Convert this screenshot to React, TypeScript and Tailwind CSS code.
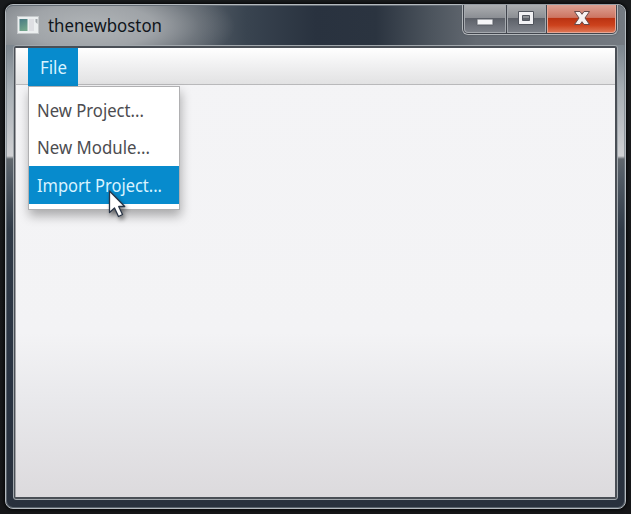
import React from "react";

const items = [
  { label: "New Project...", width: 107 },
  { label: "New Module...", width: 113 },
  { label: "Import Project...", width: 125, active: true },
];

function Label({ text, width, size = 18 }: { text: string; width: number; size?: number }) {
  return (
    <svg width={width + 4} height="28" className="block shrink-0 overflow-visible" fill="currentColor">
      <text x="0" y="20.500" fontSize={size} textLength={width} lengthAdjust="spacingAndGlyphs">
        {text}
      </text>
    </svg>
  );
}

function AppIcon() {
  return (
    <svg width="22" height="18" viewBox="0 0 22 18" className="block shrink-0">
      <defs>
        <linearGradient id="pane" x1="0" y1="0" x2="0.3" y2="1">
          <stop offset="0" stopColor="#477a83" />
          <stop offset="1" stopColor="#72a58c" />
        </linearGradient>
      </defs>
      <rect x="0.5" y="0.5" width="21" height="17" fill="#eceff0" stroke="#c4c8ca" />
      <rect x="2.5" y="3" width="8" height="12" fill="url(#pane)" />
      <rect x="12" y="3" width="5" height="12" fill="#dedfe3" />
      <path d="M18.500 3h2v5l-2-2z" fill="#a4aaad" />
    </svg>
  );
}

function WindowButtons() {
  return (
    <div className="flex h-[30px] w-[156px] rounded-b-[6px] border border-t-0 border-[#b4b8bc] bg-[#41454d] p-px pt-0 shadow-[0_0_2px_#4a5058]">
      <div className="flex w-[42px] items-center justify-center rounded-bl-[4px] border border-t-0 border-[#a5a9ae] bg-[linear-gradient(#acaeb1_0%,#8b8e93_48%,#5d6169_50%,#7c8088_100%)]">
        <svg width="18" height="8" className="mt-[7px]">
          <rect x="1" y="1" width="16" height="6" rx="0.5" fill="#f5f5f7" stroke="#5a5e66" />
        </svg>
      </div>
      <div className="ml-px flex w-[39px] items-center justify-center border border-t-0 border-[#a5a9ae] bg-[linear-gradient(#acaeb1_0%,#8b8e93_48%,#5d6169_50%,#7c8088_100%)] pr-px">
        <svg width="18" height="16" className="-mt-px">
          <path d="M1.5 1.5h15v13h-15zM5.500 5.500v5h7v-5z" fill="#f1f1f4" fillRule="evenodd" stroke="#50545d" />
        </svg>
      </div>
      <div className="ml-px flex flex-1 items-center justify-center rounded-br-[4px] border border-t-0 border-[#e5a797] bg-[linear-gradient(#dda193_0%,#cd7562_46%,#bb3312_50%,#cc421d_75%,#dd7452_100%)]">
        <svg width="18" height="16" className="-mt-px">
          <path d="M1.500 1.500h5.500L9 4.300l2-2.800h5.500L12 8l4.500 6.500H11L9 11.700l-2 2.800H1.500L6 8z" fill="#f7f2f1" stroke="#674a4a" />
        </svg>
      </div>
    </div>
  );
}

function Cursor() {
  return (
    <svg width="22" height="32" className="absolute left-[79px] top-[102px] overflow-visible drop-shadow-[2px_3px_2px_rgba(0,0,0,.45)]">
      <path d="M1.500 2v21.500l5-4.500 4 8.500 4-2-3.800-8h6z" fill="#fff" stroke="#283446" strokeWidth="1.300" strokeLinejoin="round" />
    </svg>
  );
}

function FileMenu() {
  return (
    <div className="relative">
      <div className="flex h-[38px] w-[50px] items-center bg-[#078bcd] pl-3 text-[#d9f3ff]">
        <Label text="File" width={27} />
      </div>
      <div className="absolute left-0 top-[38px] h-[124px] w-[152px] border border-[#b0b0b2] bg-white pt-[4px] shadow-[1px_6px_10px_rgba(0,0,0,.3)]">
        {items.map((item) => (
          <div
            key={item.label}
            className={`flex h-[37.500px] items-center pl-2 ${item.active ? "bg-[#078bcd] text-[#d9f3ff]" : "text-[#4c4c50]"}`}
          >
            <Label text={item.label} width={item.width} />
          </div>
        ))}
        <Cursor />
      </div>
    </div>
  );
}

export default function App() {
  return (
    <div className="h-[514px] w-[631px] overflow-hidden bg-[linear-gradient(#191b1d,#18191b_30%,#151618)] pl-[5px] pt-1 font-['Noto_Sans','Open_Sans',sans-serif]">
      <div className="flex h-[505px] w-[621px] flex-col rounded-[8px] border border-[#b3b9be] bg-[linear-gradient(#66717b_0px,#808991_45px,#a8afb5_85px,#d0d1d4_151px,#61676d_154px,#535c66_170px,#303a47_225px,#293342_380px,#29313d_100%)] shadow-[0_0_3px_1px_#050607,inset_0_0_0_1px_rgba(115,124,132,.65)]">
        <header className="flex h-10 shrink-0 items-start justify-between rounded-t-[7px] bg-[radial-gradient(ellipse_145px_48px_at_84px_21px,#b0b4b7_0%,rgba(164,168,172,.9)_45%,rgba(140,145,150,.45)_75%,transparent_100%),linear-gradient(90deg,#777c81_0px,#7e8388_100px,#59616a_185px,#394450_240px,#29323f_310px,#2b3440_370px,#4c545d_425px,#646a72_470px,#747a81_100%)] pl-[11px] pr-[7px] shadow-[inset_0_1px_0_#666e76]">
          <div className="flex h-10 items-center gap-[9px] text-[#10151b]">
            <AppIcon />
            <div className="pb-px">
              <Label text="thenewboston" width={114} />
            </div>
          </div>
          <WindowButtons />
        </header>
        <main className="mx-[7px] h-[455px] rounded-[3px] border border-[#a1a7ac] bg-[#4a4f56] px-px pb-[2px] pt-[2px]">
          <div className="flex h-full flex-col border-x border-l-[#a0a1a5] border-r-[#4a4f56] bg-[linear-gradient(#f4f4f6_0px,#f3f3f5_285px,#e9e9ec_350px,#dcdadd_100%)]">
            <nav className="relative flex h-[37px] shrink-0 border-b border-[#b9b9bb] bg-[linear-gradient(#fff,#f1f1f2_45%,#e2e2e3)] pl-[12px]">
              <FileMenu />
            </nav>
          </div>
        </main>
      </div>
    </div>
  );
}
